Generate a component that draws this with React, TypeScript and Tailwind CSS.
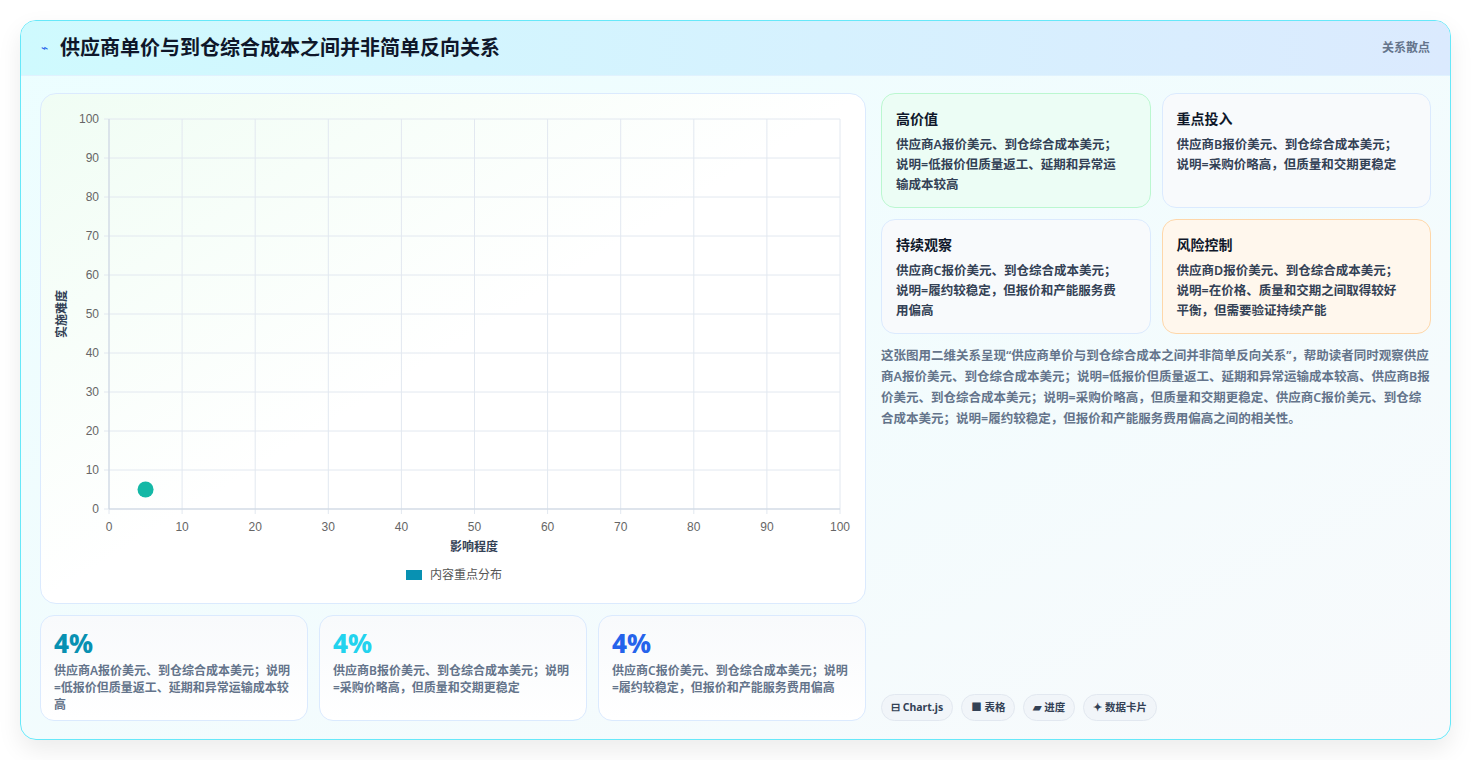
import React from "react";

const F = { fontFamily: '"Noto Sans","Noto Sans CJK SC",sans-serif' };

function Chart() {
  const x0 = 68, x1 = 799, y0 = 25, y1 = 415;
  const ticks = [0,10,20,30,40,50,60,70,80,90,100];
  const sx = (v: number) => x0 + (x1 - x0) * v / 100;
  const sy = (v: number) => y1 - (y1 - y0) * v / 100;
  return (
    <svg width="825" height="500" className="block" style={{ fontFamily: '"Liberation Sans",sans-serif' }}>
      {ticks.map(t => (
        <g key={t}>
          <line x1={sx(t)} x2={sx(t)} y1={y0} y2={y1 + 5} stroke="#e2e8f0" />
          <line x1={x0 - 5} x2={x1} y1={sy(t)} y2={sy(t)} stroke="#e2e8f0" />
          <text x={sx(t)} y={y1 + 22} fontSize="12" fill="#666" textAnchor="middle">{t}</text>
          <text x={x0 - 10} y={sy(t) + 4} fontSize="12" fill="#666" textAnchor="end">{t}</text>
        </g>
      ))}
      <line x1={x0} x2={x1} y1={y1} y2={y1} stroke="#cbd5e1" />
      <line x1={x0} x2={x0} y1={y0} y2={y1} stroke="#cbd5e1" />
      <circle cx={sx(5)} cy={sy(5)} r="8" fill="#14b8a6" />
      <text x={433} y={457} fontSize="12" fontWeight="700" fill="#334155" textAnchor="middle" style={F}>影响程度</text>
      <text transform="translate(25 220) rotate(-90)" fontSize="12" fontWeight="700" fill="#334155" textAnchor="middle" style={F}>实施难度</text>
      <rect x={365} y={476} width={16} height={10} fill="#0891b2" />
      <text x={389} y={485} fontSize="12" fill="#555" style={F}>内容重点分布</text>
    </svg>
  );
}

const stats = [
  { c: "text-[#0891b2]", t: "供应商A报价美元、到仓综合成本美元；说明=低报价但质量返工、延期和异常运输成本较高" },
  { c: "text-[#22d3ee]", t: "供应商B报价美元、到仓综合成本美元；说明=采购价略高，但质量和交期更稳定" },
  { c: "text-[#2563eb]", t: "供应商C报价美元、到仓综合成本美元；说明=履约较稳定，但报价和产能服务费用偏高" },
];

const cards = [
  { h: "高价值", t: "供应商A报价美元、到仓综合成本美元；说明=低报价但质量返工、延期和异常运输成本较高", c: "bg-[#ecfdf5] border-[#bbf7d0]" },
  { h: "重点投入", t: "供应商B报价美元、到仓综合成本美元；说明=采购价略高，但质量和交期更稳定", c: "bg-[#f8fafc] border-[#dbeafe]" },
  { h: "持续观察", t: "供应商C报价美元、到仓综合成本美元；说明=履约较稳定，但报价和产能服务费用偏高", c: "bg-[#f8fafc] border-[#dbeafe]" },
  { h: "风险控制", t: "供应商D报价美元、到仓综合成本美元；说明=在价格、质量和交期之间取得较好平衡，但需要验证持续产能", c: "bg-[#fff7ed] border-[#fed7aa]" },
];

export default function App() {
  return (
    <div className="w-[1471px] h-[760px] bg-white pt-[20px] pl-[20px]" style={F}>
      <div className="w-[1431px] h-[720px] rounded-[16px] border border-[#67e8f9] overflow-hidden bg-gradient-to-br from-[#ecfeff] to-[#f8fafc] shadow-[0_10px_25px_rgba(0,0,0,0.08)] flex flex-col">
        <div className="h-[55px] flex items-center justify-between px-[20px] bg-gradient-to-r from-[#cffafe] to-[#dbeafe] border-b border-[#e0f2fe]">
          <div className="flex items-center gap-[12px]">
            <span className="text-[#2563eb] text-[12px]">⌁</span>
            <span className="text-[20px] font-bold text-[#0f172a]">供应商单价与到仓综合成本之间并非简单反向关系</span>
          </div>
          <span className="text-[12px] text-[#64748b] font-semibold">关系散点</span>
        </div>
        <div className="flex gap-[15px] px-[19px] pt-[17px]">
          <div className="w-[826px] flex flex-col gap-[11px]">
            <div className="h-[511px] rounded-[16px] border border-[#dbeafe] bg-gradient-to-br from-[#f0fdf4] via-white to-white overflow-hidden">
              <Chart />
            </div>
            <div className="grid grid-cols-3 gap-[11px]">
              {stats.map((s, i) => (
                <div key={i} className="h-[106px] rounded-[14px] border border-[#dbeafe] bg-gradient-to-b from-[#f8fafc] to-white px-[13px] pt-[10px]">
                  <div className={`text-[26px] font-extrabold leading-[34px] ${s.c}`}>4%</div>
                  <div className="text-[12px] leading-[17px] text-[#64748b] font-semibold mt-[2px]">{s.t}</div>
                </div>
              ))}
            </div>
          </div>
          <div className="flex-1 flex flex-col">
            <div className="grid grid-cols-2 gap-[11px]">
              {cards.map((c, i) => (
                <div key={i} className={`h-[115px] rounded-[14px] border px-[14px] pt-[14px] ${c.c}`}>
                  <div className="text-[14px] font-bold text-[#0f172a]">{c.h}</div>
                  <div className="text-[12.5px] leading-[20px] text-[#334155] font-semibold mt-[6px] pr-[8px]">{c.t}</div>
                </div>
              ))}
            </div>
            <p className="mt-[11px] text-[12.5px] leading-[21px] text-[#64748b] font-semibold">这张图用二维关系呈现“供应商单价与到仓综合成本之间并非简单反向关系”，帮助读者同时观察供应商A报价美元、到仓综合成本美元；说明=低报价但质量返工、延期和异常运输成本较高、供应商B报价美元、到仓综合成本美元；说明=采购价略高，但质量和交期更稳定、供应商C报价美元、到仓综合成本美元；说明=履约较稳定，但报价和产能服务费用偏高之间的相关性。</p>
            <div className="mt-auto flex gap-[8px] pt-[258px]">
              {["⊟ Chart.js", "■ 表格", "▰ 进度", "✦ 数据卡片"].map(t => (
                <span key={t} className="h-[27px] px-[9px] rounded-full border border-[#e2e8f0] bg-[#f1f5f9] text-[10.5px] font-bold text-[#334155] flex items-center">{t}</span>
              ))}
            </div>
          </div>
        </div>
      </div>
    </div>
  );
}
